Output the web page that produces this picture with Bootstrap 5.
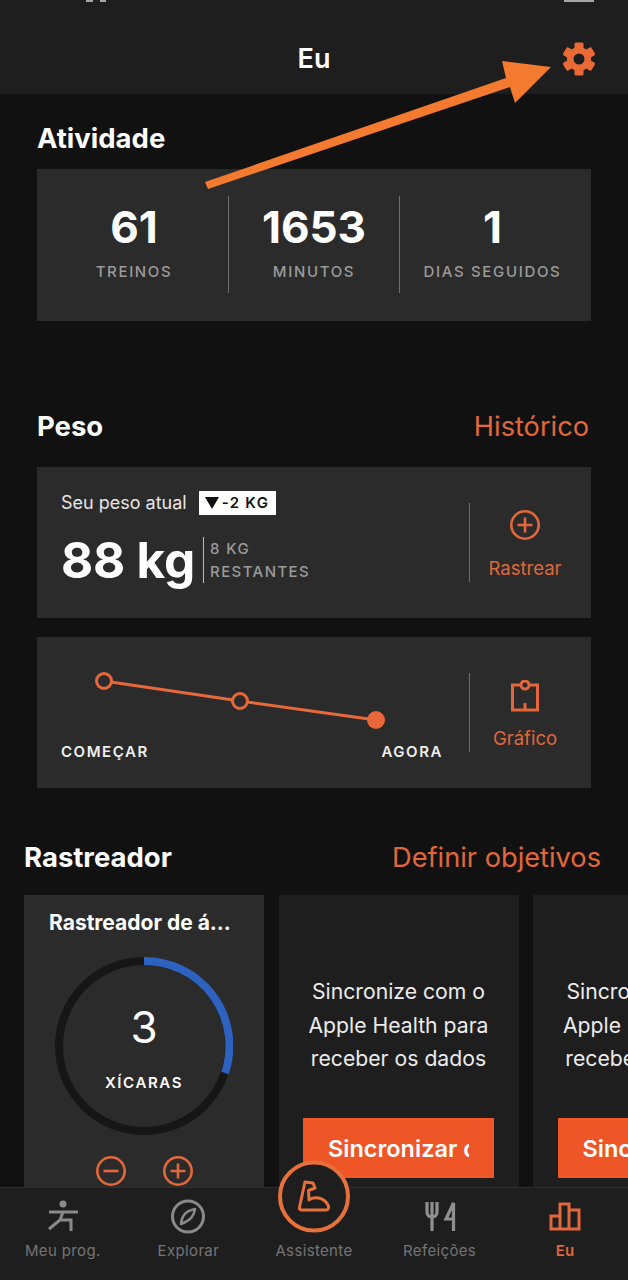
<!DOCTYPE html>
<html lang="pt">
<head>
    <meta charset="UTF-8">
    <meta name="viewport" content="width=device-width, initial-scale=1.0">
    <title>Eu</title>
    <link href="https://cdn.jsdelivr.net/npm/bootstrap@5.3.0/dist/css/bootstrap.min.css" rel="stylesheet">
    <style>
        html, body { background: #111; }
        body {
            width: 628px; height: 1280px; overflow: hidden;
            font-family: Inter, "Liberation Sans", sans-serif; color: #fff;
        }
        .top-bar { height: 94px; flex: none; background: #1e1e1e; font-size: 27px; font-weight: 600; }
        .status-mark { top: 0; height: 2px; background: #a5a5a5; }
        .gear-btn { top: 39px; left: 557px; }
        .main-area { min-height: 0; overflow: hidden; }
        .sec-title { font-size: 27.5px; font-weight: 700; line-height: 32px; margin: 0; }
        .sec-link { font-size: 27.2px; line-height: 30px; color: #e2673a; text-decoration: none; margin-top: 2px; }
        .sheet { background: #2b2b2b; margin: 0 37px; height: 151px; }

        .stat-col { height: 97px; text-align: center; }
        .stat-col.first { width: 191px; padding-left: 3px; }
        .stat-col.last { width: 191px; padding-right: 6px; }
        .stat-col.narrow { width: 172px; border-left: 1px solid #6e6e6e; border-right: 1px solid #6e6e6e; }
        .stat-num { font-size: 44px; font-weight: 700; line-height: 50px; padding-top: 6px; }
        .stat-label { font-size: 15px; line-height: 20px; letter-spacing: 1.65px; color: #9b9b9b; margin-top: 10px; font-weight: 500; }

        .weight-now { font-size: 18px; line-height: 24px; color: #e6e6e6; }
        .down-tag { background: #fff; color: #111; font-size: 15px; font-weight: 600; letter-spacing: 1.3px; line-height: 24px; padding: 0 7px 0 6px; margin-left: 12px; }
        .down-tri { width: 0; height: 0; border-left: 7px solid transparent; border-right: 7px solid transparent; border-top: 12px solid #111; margin-right: 3px; }
        .weight-big { font-size: 49.5px; font-weight: 700; line-height: 46px; letter-spacing: -.2px; }
        .weight-rest { border-left: 1px solid #bdbdbd; margin-left: 8px; padding-left: 6px; height: 46px; font-size: 15px; line-height: 23px; letter-spacing: 1.4px; color: #9b9b9b; font-weight: 500; }
        .side-act { width: 111px; height: 79px; margin: 36px 11px 0 0; border-left: 1px solid #6e6e6e; color: #e2673a; font-size: 18.5px; line-height: 22px; text-align: center; flex: none; padding-top: 7px; }
        .side-act svg { display: block; margin: 0 auto 17px; }
        .side-act.graph svg { margin-bottom: 15px; }
        .chart-label { font-size: 15px; font-weight: 600; line-height: 20px; letter-spacing: 1.55px; color: #f0f0f0; margin-top: 2px; }

        .tracker-row { gap: 14.5px; margin: 22px 0 0 24px; }
        .tracker-box { width: 240px; height: 320px; flex: none; background: #1e1e1e; }
        .tracker-box.water { background: #2b2b2b; padding: 14px 25px 0; }
        .water-title { font-size: 21px; font-weight: 700; line-height: 28px; white-space: nowrap; }
        .ring-stack { display: grid; justify-content: center; margin-top: 20px; }
        .ring-stack > * { grid-area: 1 / 1; }
        .ring-num { font-size: 44px; line-height: 50px; padding-top: 45px; text-align: center; }
        .ring-label { font-size: 15px; font-weight: 600; line-height: 20px; letter-spacing: 1.6px; margin-top: 21px; }
        .water-btns { gap: 37px; margin-top: 21px; }
        .sync-text { padding-top: 80px; font-size: 21.2px; line-height: 33.5px; text-align: center; color: #ececec; white-space: nowrap; }
        .sync-btn { display: block; width: 191px; height: 60px; margin: 42.5px auto 0; padding: 2px 25px 0; background: #ee5628; border: 0; border-radius: 0; color: #fff; font-size: 23.5px; font-weight: 600; line-height: 58px; }
        .sync-btn span { display: block; overflow: hidden; white-space: nowrap; }

        .tab-bar { height: 93px; flex: none; background: #1e1e1e; border-top: 1px solid #2f2f2f; padding-top: 9px; }
        .tab-item { width: 20%; text-align: center; font-size: 15px; line-height: 20px; letter-spacing: .35px; color: #757575; }
        .tab-item svg { display: block; margin: 0 auto 4px; }
        .tab-item.on { color: #e2673a; font-weight: 600; }
        .coach-btn { top: -30px; left: 275px; }
        .arrow-over { top: 0; left: 0; pointer-events: none; }
    </style>
</head>
<body class="d-flex flex-column position-relative">
    <header class="top-bar d-flex align-items-center justify-content-center position-relative">
        <span style="margin-top:24px">Eu</span>
        <svg class="gear-btn position-absolute" width="44" height="40" viewBox="557 39 44 40" fill="#ea6a35">
            <circle cx="579" cy="59" r="12"/>
            <rect x="574.5" y="42.5" width="9" height="33" rx="1.5"/>
            <rect x="574.5" y="42.5" width="9" height="33" rx="1.5" transform="rotate(60 579 59)"/>
            <rect x="574.5" y="42.5" width="9" height="33" rx="1.5" transform="rotate(120 579 59)"/>
            <circle cx="579" cy="59" r="5.5" fill="#1e1e1e"/>
        </svg>
    </header>
    <span class="status-mark position-absolute" style="left:564px;width:30px"></span>
    <span class="status-mark position-absolute" style="left:86px;width:7px"></span>
    <span class="status-mark position-absolute" style="left:100px;width:6px"></span>

    <main class="main-area flex-grow-1">
        <h2 class="sec-title" style="margin:28px 37px 15px">Atividade</h2>
        <div class="sheet d-flex" style="height:152px;padding-top:27px">
            <div class="stat-col first">
                <div class="stat-num">61</div>
                <div class="stat-label">TREINOS</div>
            </div>
            <div class="stat-col narrow">
                <div class="stat-num">1653</div>
                <div class="stat-label">MINUTOS</div>
            </div>
            <div class="stat-col last">
                <div class="stat-num">1</div>
                <div class="stat-label">DIAS SEGUIDOS</div>
            </div>
        </div>

        <div class="d-flex justify-content-between align-items-center" style="margin:89px 39px 25px 37px">
            <h2 class="sec-title">Peso</h2>
            <a class="sec-link" href="#">Histórico</a>
        </div>
        <div class="sheet d-flex">
            <div class="flex-grow-1" style="padding:24px 0 0 24px">
                <div class="d-flex align-items-center weight-now">
                    Seu peso atual
                    <span class="down-tag d-inline-flex align-items-center"><span class="down-tri"></span>-2 KG</span>
                </div>
                <div class="d-flex" style="margin-top:22px">
                    <div class="weight-big">88 kg</div>
                    <div class="weight-rest">8 KG<br>RESTANTES</div>
                </div>
            </div>
            <div class="side-act">
                <svg width="30" height="30" viewBox="0 0 30 30" fill="none" stroke="#e2673a" stroke-width="2.6">
                    <circle cx="15" cy="15" r="13.7"/>
                    <path d="M15 7.5v15M7.5 15h15"/>
                </svg>
                Rastrear
            </div>
        </div>
        <div class="sheet d-flex" style="margin-top:19px">
            <div class="flex-grow-1" style="padding:13px 26px 0 24px">
                <svg class="d-block" width="382" height="90" viewBox="61 650 382 90" fill="none" stroke="#e8683a" stroke-width="3">
                    <path d="M104 681L240 701L376 720"/>
                    <circle cx="104" cy="681" r="7.5" fill="#2b2b2b"/>
                    <circle cx="240" cy="701" r="7.5" fill="#2b2b2b"/>
                    <circle cx="376" cy="720" r="9" fill="#e8683a" stroke="none"/>
                </svg>
                <div class="d-flex justify-content-between chart-label"><span>COMEÇAR</span><span>AGORA</span></div>
            </div>
            <div class="side-act graph">
                <svg width="30" height="32" viewBox="0 0 30 32" fill="none" stroke="#e2673a" stroke-width="3">
                    <path d="M10 5H2.5V30H27.5V5H20M15 23V30"/>
                    <circle cx="15" cy="5" r="4"/>
                </svg>
                Gráfico
            </div>
        </div>

        <div class="d-flex justify-content-between align-items-center" style="margin:53px 27px 0 24px">
            <h2 class="sec-title">Rastreador</h2>
            <a class="sec-link" href="#">Definir objetivos</a>
        </div>
        <div class="tracker-row d-flex">
            <div class="tracker-box water">
                <div class="water-title">Rastreador de á...</div>
                <div class="ring-stack">
                    <svg width="178" height="178" viewBox="0 0 178 178" fill="none" stroke-width="8">
                        <circle cx="89" cy="89" r="85" stroke="#161616"/>
                        <path d="M89 4A85 85 0 0 1 170 116" stroke="#2e62c0"/>
                    </svg>
                    <div class="text-center">
                        <div class="ring-num">3</div>
                        <div class="ring-label">XÍCARAS</div>
                    </div>
                </div>
                <div class="water-btns d-flex justify-content-center">
                    <svg width="30" height="30" viewBox="0 0 30 30" fill="none" stroke="#e2673a" stroke-width="2.6">
                        <circle cx="15" cy="15" r="13.7"/>
                        <path d="M7.5 15h15"/>
                    </svg>
                    <svg width="30" height="30" viewBox="0 0 30 30" fill="none" stroke="#e2673a" stroke-width="2.6">
                        <circle cx="15" cy="15" r="13.7"/>
                        <path d="M15 7.5v15M7.5 15h15"/>
                    </svg>
                </div>
            </div>
            <div class="tracker-box">
                <div class="sync-text">Sincronize com o<br>Apple Health para<br>receber os dados</div>
                <button class="btn sync-btn"><span>Sincronizar dados</span></button>
            </div>
            <div class="tracker-box">
                <div class="sync-text">Sincronize com o<br>Apple Health para<br>receber os dados</div>
                <button class="btn sync-btn"><span>Sincronizar dados</span></button>
            </div>
        </div>
    </main>

    <nav class="tab-bar d-flex position-relative">
        <div class="tab-item">
            <svg width="40" height="40" viewBox="43 1197 40 40" fill="none" stroke="#8a8a8a" stroke-width="3">
                <circle cx="63" cy="1204" r="3.5" fill="#8a8a8a" stroke="none"/>
                <path d="M49 1212H78M63 1212L60 1220H71V1231M60 1220L49 1229"/>
            </svg>
            Meu prog.
        </div>
        <div class="tab-item">
            <svg width="40" height="40" viewBox="168 1197 40 40" fill="none" stroke="#8a8a8a" stroke-width="3">
                <circle cx="188" cy="1216.5" r="15.5"/>
                <path d="M195 1209C194 1216 191 1220 181 1224C182 1215 186 1211 195 1209Z" stroke-width="2.5" stroke-linejoin="round"/>
            </svg>
            Explorar
        </div>
        <div class="tab-item">
            <div style="height:44px"></div>
            Assistente
        </div>
        <div class="tab-item">
            <svg width="40" height="40" viewBox="418 1197 40 40" fill="none" stroke="#8f8f8f" stroke-width="3.2">
                <path d="M425 1202V1212C425 1216 428 1217 430 1217C432 1217 435 1216 435 1212V1202M430 1202V1231M451.5 1231V1203L444 1219H451.5"/>
            </svg>
            Refeições
        </div>
        <div class="tab-item on">
            <svg width="40" height="40" viewBox="544 1197 40 40" fill="none" stroke="#e2673a" stroke-width="3">
                <path d="M550 1229V1216H559V1229ZM559 1229V1204H568V1229ZM568 1229V1210H578V1229Z"/>
            </svg>
            Eu
        </div>
        <svg class="coach-btn position-absolute" width="76" height="76" viewBox="275 1157 76 76" fill="none" stroke="#e8703a">
            <circle cx="314" cy="1195.5" r="34" fill="#1e1e1e" stroke-width="4"/>
            <path d="M305 1181L313 1182L315 1187L308.5 1189.5L309 1199C313 1195 324 1196 328 1204C329.5 1207 328 1209 326 1209L302 1209C300 1209 299 1208 299.5 1206Z" stroke-width="3" stroke-linejoin="round"/>
        </svg>
    </nav>

    <svg class="arrow-over position-absolute" width="628" height="200" viewBox="0 0 628 200">
        <polygon fill="#f47a30" points="205,182 506,78 502,61 551,67 515,103 510,87 208,189"/>
    </svg>

    <script src="https://cdn.jsdelivr.net/npm/bootstrap@5.3.0/dist/js/bootstrap.bundle.min.js"></script>
</body>
</html>
